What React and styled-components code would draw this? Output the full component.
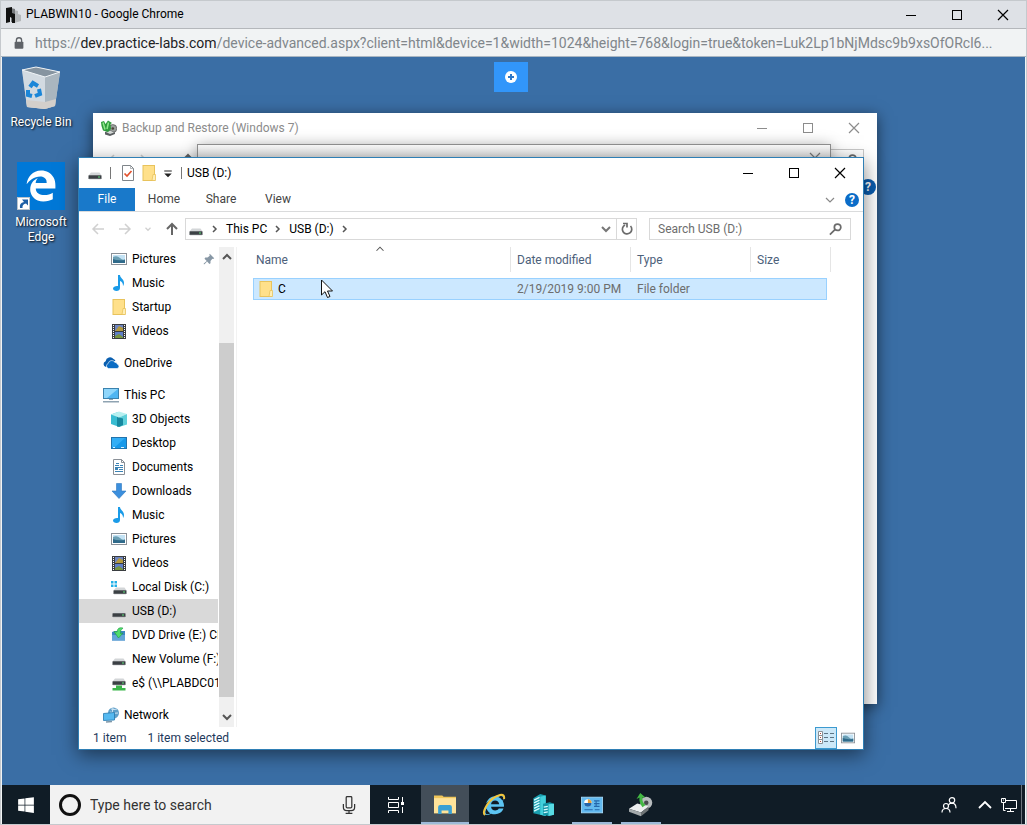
import React from 'react';
import styled, { createGlobalStyle, css } from 'styled-components';
import { FaWindows, FaEdgeLegacy, FaInternetExplorer } from 'react-icons/fa';

const quickAccess = [
    { name: 'Pictures', icon: 'pictures', pinned: true },
    { name: 'Music', icon: 'music' },
    { name: 'Startup', icon: 'folder' },
    { name: 'Videos', icon: 'videos' },
];

const thisPc = [
    { name: '3D Objects', icon: 'objects' },
    { name: 'Desktop', icon: 'desktop' },
    { name: 'Documents', icon: 'documents' },
    { name: 'Downloads', icon: 'downloads' },
    { name: 'Music', icon: 'music' },
    { name: 'Pictures', icon: 'pictures' },
    { name: 'Videos', icon: 'videos' },
    { name: 'Local Disk (C:)', icon: 'systemDrive' },
    { name: 'USB (D:)', icon: 'drive', selected: true },
    { name: 'DVD Drive (E:) CI', icon: 'dvd' },
    { name: 'New Volume (F:)', icon: 'drive' },
    { name: 'e$ (\\\\PLABDC01)', icon: 'netDrive' },
];

const files = [
    { name: 'C', modified: '2/19/2019 9:00 PM', type: 'File folder', size: '' },
];

/* ---------- icons ---------- */

const driveBody = (
    <g>
        <path d="M4 7.500h8.500l2 3h-13z" fill="#d3d6d8" />
        <rect x="1.500" y="10.300" width="13" height="3.700" rx=".5" fill="#3b4044" />
        <path d="M2 13.800h12" stroke="#8b8f92" strokeWidth=".6" />
        <rect x="11" y="11.500" width="2" height="1" fill="#5fe07a" />
    </g>
);

const glyphs = {
    pictures: (
        <g>
            <rect x=".5" y="2.500" width="15" height="11" fill="#fff" stroke="#8a9097" />
            <rect x="2" y="4" width="12" height="8" fill="#c3e2f4" />
            <path d="M2 6q4-2 7 1t5 1v4H2z" fill="#6b9fb4" />
            <path d="M2 8q4 2 12 1v3H2z" fill="#2f6a8a" />
        </g>
    ),
    music: (
        <path d="M7 0h2c0 3 4 4 4 8 0 1-.5 2.500-1 3 .2-3-1.500-4.500-3-5v7c0 2-1.500 3-3.500 3S2 15 2 13.500 4 11 6 11h1z" fill="#1a9be8" />
    ),
    folder: (
        <g>
            <rect x="2" y=".5" width="11.500" height="15" fill="#ffe08a" stroke="#e8c35c" />
            <path d="M12 9.500h2.500v6H11z" fill="#ffeeb5" stroke="#e8c35c" strokeWidth=".8" />
        </g>
    ),
    videos: (
        <g>
            <rect x="1" y="1" width="14" height="15" fill="#3a3d40" />
            <rect x="4" y="2" width="8" height="6" fill="#6f86c2" />
            <rect x="4" y="9" width="8" height="6" fill="#5f7fc8" />
            <path d="M5 7l3-4 4 2v3H4z" fill="#b49a3e" />
            <path d="M4 13l4-2 4 3v1H4z" fill="#78953f" />
            <path d="M2.500 2v14M13.500 2v14" stroke="#fff" strokeWidth="1" strokeDasharray="1 1" />
        </g>
    ),
    cloud: (
        <g fill="#0a6cc4">
            <path d="M3 12a3 3 0 0 1-.4-5.800A4.500 4.500 0 0 1 10.500 4 4 4 0 0 1 12.500 6L8 6.500 5.500 9z" fill="#0a5fb0" />
            <path d="M5.500 13.500a2.600 2.600 0 0 1-.3-5 3.600 3.600 0 0 1 6.600-1.300 3 3 0 0 1 2.600 2A2.200 2.200 0 0 1 14 13.500z" stroke="#fff" strokeWidth=".6" />
        </g>
    ),
    pc: (
        <g>
            <rect x=".5" y="1.500" width="15" height="10" fill="#4fb5f2" stroke="#3b82ae" />
            <path d="M1 2h14L4 11H1z" fill="#8fd6fb" />
            <rect x="6" y="12" width="4" height="1" fill="#8fa3b2" />
            <rect x="0" y="14" width="16" height="1.500" fill="#8fa3b2" />
        </g>
    ),
    objects: (
        <g>
            <path d="M0 3.500L7 1v14.500L0 13z" fill="#38bcd1" />
            <path d="M0 3.500L8 .5l8 2.500-8 3.500z" fill="#b7f0f0" />
            <path d="M8 6.500L16 3v10.500l-8 2.500z" fill="#5fd0da" />
            <path d="M6 6l6 1.500V14l-4 2-2-.5z" fill="#17889f" />
        </g>
    ),
    desktop: (
        <g>
            <rect x=".5" y="2.500" width="15" height="11" fill="#1799ea" stroke="#2273ac" />
            <path d="M1 3h13L4 12H1z" fill="#33aef5" />
            <path d="M2 12.500h12" stroke="#d8f0ff" strokeDasharray="2 6 3 1" />
        </g>
    ),
    documents: (
        <g>
            <path d="M2.500.5h8l3 3v12h-11z" fill="#fff" stroke="#8a9097" />
            <path d="M10.500.5v3h3" fill="none" stroke="#8a9097" />
            <path d="M5 4.500h3M4 6.500h4M9 6.500h3M4 8.500h8M8 10.500h4M4 12.500h8" stroke="#3b83b5" />
            <rect x="4" y="9" width="3" height="2" fill="#3b83b5" />
        </g>
    ),
    downloads: <path d="M5.500.5h5V8h4.500L8 15.500 1 8h4.500z" fill="#3c8fdd" stroke="#2f78c0" strokeWidth=".6" />,
    drive: driveBody,
    systemDrive: (
        <g>
            <g transform="translate(1 1)">{driveBody}</g>
            <path d="M0 2h2.500v2.500H0zM3.500 2H6v2.500H3.500zM0 5.500h2.500V8H0zM3.500 5.500H6V8H3.500z" fill="#22b0e8" />
        </g>
    ),
    dvd: (
        <g>
            <path d="M1 5l3-1h10v9.500H1z" fill="#3d86c4" />
            <path d="M1 8h13v5.500H1z" fill="#62a5d8" />
            <path d="M3 4.500L7.500 11l4.500-5-2.500.5Q9 3 12 1 6.500-.5 6 5z" fill="#4fdc6c" stroke="#1d9a3e" strokeWidth=".6" />
        </g>
    ),
    netDrive: (
        <g>
            <g transform="translate(0 -4)">{driveBody}</g>
            <path d="M5 10.500h6v2.500h3.500v2.500h-13V13H5z" fill="#3bb54a" />
        </g>
    ),
    network: (
        <g>
            <circle cx="10.500" cy="6" r="5.500" fill="#5f9fc8" />
            <path d="M8 2q3 1 6 0M7 5q4 2 8 1M10 1q-2 4 1 9" stroke="#cfe6f5" fill="none" />
            <path d="M.5 6.500l11-1v7.500l-11 .5z" fill="#55b9f0" stroke="#2477ad" strokeWidth=".8" />
            <path d="M3 15l6-.5" stroke="#7f97a8" strokeWidth="1.500" />
        </g>
    ),
    checkDoc: (
        <g>
            <path d="M2.500.5h8l3 3v12h-11z" fill="#fff" stroke="#7f858a" />
            <path d="M10.500.5v3h3" fill="none" stroke="#7f858a" strokeWidth=".6" />
            <path d="M4.500 8.500L7 11l4.500-5" fill="none" stroke="#e2522e" strokeWidth="1.700" />
        </g>
    ),
    backup: (
        <g>
            <circle cx="11.800" cy="8.500" r="4" fill="#9a9f9c" stroke="#444" strokeWidth=".6" />
            <circle cx="11.800" cy="8.500" r="1.300" fill="#4a4438" />
            <path d="M4 12l5-2 5 2.500v1.500l-5 2-5-1.500z" fill="#5a5e60" />
            <path d="M5 12l4-1.500 4 2-4 1.500z" fill="#d4d8d6" />
            <path d="M0 2l3-1 1.500 3L7 .5 11 3 9.500 4l.5 5-3 3-5-1.500L.5 6z" fill="#2f9c3c" />
            <path d="M2 2.500l2 7M7.500 2.500L6 9" stroke="#8fe88a" strokeWidth="1.500" />
        </g>
    ),
    pin: (
        <path d="M9 1l6 6-1.500 1-1-.3-2.500 3 0 3-1.500 1-3-3.500L2 15l-1 0 0-1 4-3.500L2 7.500 3 6h3l3-2.500L8.500 2z" fill="#8797a5" />
    ),
    magnifier: (
        <path d="M1 14.500l5.500-5.500M9.800 2.300a3.700 3.700 0 1 1 0 7.400 3.700 3.700 0 0 1 0-7.400z" fill="none" stroke="#6b6b6b" strokeWidth="2" />
    ),
    refresh: (
        <g fill="none" stroke="#6b6b6b" strokeWidth="1.700">
            <path d="M11.500 5A4.700 4.700 0 1 1 6 4" />
            <path d="M4 2.500h4v4" />
        </g>
    ),
    back: <path d="M14 8H3M8 3L3 8l5 5" fill="none" stroke="currentColor" strokeWidth="1.500" />,
    forward: <path d="M2 8h11M8 3l5 5-5 5" fill="none" stroke="currentColor" strokeWidth="1.500" />,
    up: <path d="M8 14V3M3 8l5-5 5 5" fill="none" stroke="currentColor" strokeWidth="2" />,
    chevronDown: <path d="M4 6l4 4 4-4" fill="none" stroke="currentColor" strokeWidth="2" />,
    chevronUp: <path d="M4 10l4-4 4 4" fill="none" stroke="currentColor" strokeWidth="2" />,
    chevronRight: <path d="M6 5l3 3-3 3" fill="none" stroke="currentColor" strokeWidth="1.500" />,
    thinDown: <path d="M4 6l4 4 4-4" fill="none" stroke="currentColor" strokeWidth="1.200" />,
    thinUp: <path d="M4 10l4-4 4 4" fill="none" stroke="currentColor" strokeWidth="1.200" />,
    customize: <path d="M3 4.500h10v1.500H3zM3 8.500h10l-5 5z" fill="#222" />,
    minimize: <path d="M3 8.500h10" stroke="currentColor" />,
    maximize: <rect x="3.500" y="3.500" width="9" height="9" fill="none" stroke="currentColor" />,
    close: <path d="M3 3l10 10M13 3L3 13" stroke="currentColor" strokeWidth="1.200" />,
    details: (
        <g>
            <path d="M.5 1.500h4v4h-4zM.5 5.500h4v4h-4zM.5 9.500h4v4h-4z" fill="#fff" stroke="#8a8f94" />
            <path d="M2 3.500h1M2 7.500h1M2 11.500h1" stroke="#b04a3a" />
            <path d="M6 3.500h4M12 3.500h4M6 7.500h4M12 7.500h4M6 11.500h4M12 11.500h4" stroke="#5d7585" />
        </g>
    ),
    lock: (
        <g>
            <rect x="3" y="6.500" width="10" height="8" rx="1" fill="#5f6368" />
            <path d="M5 7V5a3 3 0 0 1 6 0v2" fill="none" stroke="#5f6368" strokeWidth="1.500" />
        </g>
    ),
    plab: (
        <g>
            <path d="M9 3l4 1v3l3 1v6l-7 2z" fill="#b4b7ba" />
            <path d="M6 1l4 1v13H6z" fill="#777a7d" />
            <path d="M1 1l6-1v6l3 1v9H7v-5l-2-1v5l-4 1z" fill="#111" />
        </g>
    ),
    plus: (
        <g>
            <circle cx="8" cy="8" r="6" fill="#fff" />
            <path d="M8 5v6M5 8h6" stroke="#2e78c8" strokeWidth="2" />
        </g>
    ),
    taskView: (
        <g fill="none" stroke="#fff">
            <path d="M.5 0v2.500h10V0M.5 16v-2.500h10V16M.5 5.500h10v5H.500zM14.500 0v5M14.500 10v6" />
            <rect x="13" y="5" width="3" height="3" fill="#fff" stroke="none" />
        </g>
    ),
    fileExplorer: (
        <g>
            <path d="M0 1h6l1 1h9v12H0z" fill="#f0c65a" />
            <path d="M0 3h16v11H0z" fill="#ffe39a" />
            <path d="M3 9.500q0-1.500 1.500-1.500h7Q13 8 13 9.500V14.500h-2.500V12h-5v2.500H3z" fill="#3aa0d4" />
        </g>
    ),
    servers: (
        <g>
            <path d="M1 3l5-3 4 1v15l-9-2z" fill="#1a9fb0" />
            <path d="M6 2l4-1v15l-4-1z" fill="#42d0dc" />
            <path d="M1.500 4.500l4-2M1.500 6.500l4-2M1.500 8.500l4-2M1.500 10.500l4-2M1.500 12.500l4-2" stroke="#d6fbff" />
            <path d="M8 7l5-1 3 1v8l-4 1-4-1z" fill="#1496a8" />
            <path d="M12 7.500l4-.5v8l-4 1z" fill="#58dbe4" />
            <path d="M8.500 9.500l3-.5M8.500 11.500l3-.5M8.500 13.500l3-.5" stroke="#d6fbff" />
        </g>
    ),
    controlPanel: (
        <g>
            <rect x=".3" y="2.300" width="15.400" height="11.400" fill="#63baf0" stroke="#a9dcfa" strokeWidth=".6" />
            <circle cx="5" cy="6.500" r="2.700" fill="#fff" />
            <path d="M5 6.500V3.800a2.700 2.700 0 0 1 2.700 2.700z" fill="#e5a03c" />
            <path d="M5 6.500H7.700A2.700 2.700 0 0 1 2.300 6.500z" fill="#2265ac" />
            <path d="M11 4.500v5M9.500 5h4M9.500 7h4M9.500 9h4M2.500 11.500h6M10 11.500h3.500" stroke="#2468ac" strokeWidth=".8" />
        </g>
    ),
    restoreDrive: (
        <g>
            <circle cx="11.500" cy="6.500" r="4" fill="#b8bcbe" />
            <circle cx="11.500" cy="6.500" r="1.500" fill="#474b4d" />
            <path d="M0 10.500l5.500-3.500L13 9l-5 4z" fill="#eceeef" />
            <path d="M0 10.500L8 13v2.500l-8-3z" fill="#a4a9ab" />
            <path d="M8 13l5-4v2.500l-5 4z" fill="#6f7476" />
            <path d="M9 9.500Q6.500 6 7 3L5 4l2.500-4L11 3 9 3q-.5 3 2 5z" fill="#43b843" />
        </g>
    ),
    microphone: (
        <g fill="none" stroke="#333" strokeWidth="1.100">
            <rect x="5.500" y=".5" width="5" height="10" rx="1" />
            <path d="M3 7v3q0 3 3 3h4q3 0 3-3V7M8 13v2.500M5 15.500h6" />
        </g>
    ),
    people: (
        <g fill="none" stroke="#fff" strokeWidth="1.200">
            <circle cx="11" cy="3.300" r="2.700" />
            <path d="M7.500 8q1-1.800 3.500-1.800 4 .3 4 5" />
            <circle cx="5" cy="9" r="2.500" />
            <path d="M1 15.500q0-4 4-4t4 4" />
        </g>
    ),
    ethernet: (
        <g fill="none" stroke="#fff">
            <path d="M5 3.500h10.500v8H4M9.500 11.500v3M6 14.500h7M2.500 6v7.500h2" />
            <path d="M.5 1.500h4v4h-4z" />
            <path d="M2 3h1" />
        </g>
    ),
};

const Icon = ({ name, size = 16 }) => (
    <Svg viewBox="0 0 16 16" $size={size} aria-hidden="true">{glyphs[name]}</Svg>
);

const RecycleBin = () => (
    <svg width="40" height="44" viewBox="0 0 40 44" aria-hidden="true">
        <path d="M1 4l14-3 24 5-5 34-10 3-18-2z" fill="#cbd3d9" fillOpacity=".85" />
        <path d="M1 4l14-3 24 5-15 5z" fill="#8694a0" />
        <path d="M1 4l23 7v32L6 41z" fill="#dce2e6" fillOpacity=".75" />
        <path d="M24 11l15-5-5 34-10 3z" fill="#aab6bf" />
        <path d="M5 34l19 2 11-3-1 7-10 3-18-2z" fill="#d3cfcb" />
        <path d="M1 4l14-3 24 5-15 5z" fill="none" stroke="#eef2f5" />
        <g fill="none" stroke="#1b86d8" strokeWidth="4">
            <path d="M9 21l3-4 5 3" />
            <path d="M18 23l1 5-5 2" />
            <path d="M11 30l-4-1 0-5" />
        </g>
    </svg>
);

const ShortcutArrow = () => (
    <ShortcutSvg viewBox="0 0 13 13" aria-hidden="true">
        <rect x=".5" y=".5" width="12" height="12" fill="#fff" stroke="#b9c4cc" />
        <path d="M3 11Q2 6 7 5L5 2.500h6V8.500L9 6.500Q5 7 5.500 11z" fill="#1d5fa5" />
    </ShortcutSvg>
);

const BrowserTaskIcon = () => (
    <BrowserMark>
        <FaInternetExplorer />
        <svg viewBox="0 0 24 24" aria-hidden="true">
            <path d="M3 22Q0 20 5 12T18 2q5-1 4 4" fill="none" stroke="#f3c53c" strokeWidth="2" />
        </svg>
    </BrowserMark>
);

const Cursor = () => (
    <CursorSvg viewBox="0 0 12 20" aria-hidden="true">
        <path d="M.5 1v15l3.500-3.300L6.500 18.500l2.500-1-2.500-5.500h5z" fill="#fff" stroke="#111" />
    </CursorSvg>
);

/* ---------- parts ---------- */

const WindowControls = ({ color }) => (
    <Controls $color={color}>
        <ControlButton type="button" aria-label="Minimize"><Icon name="minimize" /></ControlButton>
        <ControlButton type="button" aria-label="Maximize"><Icon name="maximize" /></ControlButton>
        <ControlButton type="button" aria-label="Close"><Icon name="close" /></ControlButton>
    </Controls>
);

const TreeItem = ({ name, icon, nested, pinned, selected }) => (
    <TreeLink href="#" $nested={nested} $selected={selected}>
        <Icon name={icon} />
        <span>{name}</span>
        {pinned && <Pin><Icon name="pin" size={12} /></Pin>}
    </TreeLink>
);

const HistoryButtons = () => (
    <History>
        <ArrowButton type="button" aria-label="Back" $faded><Icon name="back" /></ArrowButton>
        <ArrowButton type="button" aria-label="Forward" $faded><Icon name="forward" /></ArrowButton>
        <ArrowButton type="button" aria-label="Recent locations" $faded><Icon name="chevronDown" size={10} /></ArrowButton>
        <ArrowButton type="button" aria-label="Up"><Icon name="up" /></ArrowButton>
    </History>
);

const BackupWindow = () => (
    <BackWindow>
        <TitleBar $muted>
            <Icon name="backup" />
            <WindowTitle>Backup and Restore (Windows 7)</WindowTitle>
            <WindowControls color="#8c8c8c" />
        </TitleBar>
        <BackToolbar>
            <HistoryButtons />
            <BackSearch><Icon name="magnifier" size={14} /></BackSearch>
        </BackToolbar>
        <DialogEdge>
            <Icon name="close" />
        </DialogEdge>
        <BackHelp type="button" aria-label="Help">?</BackHelp>
    </BackWindow>
);

const Explorer = () => (
    <ExplorerWindow>
        <TitleBar>
            <QuickTools>
                <Icon name="drive" />
                <Divider />
                <ToolGroup>
                    <ToolButton type="button" aria-label="Properties"><Icon name="checkDoc" /></ToolButton>
                    <ToolButton type="button" aria-label="New folder"><Icon name="folder" /></ToolButton>
                    <ToolButton type="button" aria-label="Customize toolbar"><Icon name="customize" size={12} /></ToolButton>
                </ToolGroup>
                <Divider />
            </QuickTools>
            <WindowTitle>USB (D:)</WindowTitle>
            <WindowControls color="#000" />
        </TitleBar>

        <Ribbon>
            <RibbonTab type="button" $active>File</RibbonTab>
            <RibbonTab type="button">Home</RibbonTab>
            <RibbonTab type="button">Share</RibbonTab>
            <RibbonTab type="button">View</RibbonTab>
            <RibbonEnd>
                <Icon name="thinDown" />
                <HelpButton type="button" aria-label="Help">?</HelpButton>
            </RibbonEnd>
        </Ribbon>

        <AddressRow>
            <HistoryButtons />
            <AddressBox>
                <Crumbs>
                    <Icon name="drive" />
                    <Icon name="chevronRight" />
                    <a href="#">This PC</a>
                    <Icon name="chevronRight" />
                    <a href="#">USB (D:)</a>
                    <Icon name="chevronRight" />
                </Crumbs>
                <AddressButton type="button" aria-label="Previous locations"><Icon name="chevronDown" /></AddressButton>
                <AddressButton type="button" aria-label="Refresh" $bordered><Icon name="refresh" /></AddressButton>
            </AddressBox>
            <SearchBox>
                <input type="search" aria-label="Search USB (D:)" placeholder="Search USB (D:)" />
                <Icon name="magnifier" size={14} />
            </SearchBox>
        </AddressRow>

        <ExplorerBody>
            <NavPane>
                <Tree>
                    <TreeGroup>
                        {quickAccess.map(item => <TreeItem key={item.name} nested {...item} />)}
                    </TreeGroup>
                    <TreeGroup>
                        <TreeItem name="OneDrive" icon="cloud" />
                    </TreeGroup>
                    <TreeGroup>
                        <TreeItem name="This PC" icon="pc" />
                        {thisPc.map(item => <TreeItem key={item.name} nested {...item} />)}
                    </TreeGroup>
                    <TreeGroup>
                        <TreeItem name="Network" icon="network" />
                    </TreeGroup>
                </Tree>
                <ScrollBar>
                    <Icon name="chevronUp" />
                    <ScrollThumb />
                    <Icon name="chevronDown" />
                </ScrollBar>
            </NavPane>
            <FilePane>
                <SortMark><Icon name="thinUp" size={14} /></SortMark>
                <FileTable>
                    <colgroup>
                        <col />
                        <col width="120" />
                        <col width="120" />
                        <col width="76" />
                    </colgroup>
                    <thead>
                        <tr>
                            <th>Name</th>
                            <th>Date modified</th>
                            <th>Type</th>
                            <th>Size</th>
                        </tr>
                    </thead>
                    <tbody>
                        {files.map(file => (
                            <tr key={file.name}>
                                <td>
                                    <FileName>
                                        <Icon name="folder" />
                                        {file.name}
                                    </FileName>
                                </td>
                                <td>{file.modified}</td>
                                <td>{file.type}</td>
                                <td>{file.size}</td>
                            </tr>
                        ))}
                    </tbody>
                </FileTable>
                <Cursor />
            </FilePane>
        </ExplorerBody>

        <StatusBar>
            <span>1 item</span>
            <span>1 item selected</span>
            <ViewButtons>
                <ViewButton type="button" aria-label="Details view" $active><Icon name="details" /></ViewButton>
                <ViewButton type="button" aria-label="Large thumbnails"><Icon name="pictures" size={14} /></ViewButton>
            </ViewButtons>
        </StatusBar>
    </ExplorerWindow>
);

const App = () => (
    <Page>
        <GlobalStyle />
        <ChromeTitle>
            <Icon name="plab" />
            <WindowTitle>PLABWIN10 - Google Chrome</WindowTitle>
            <WindowControls color="#000" />
        </ChromeTitle>
        <UrlBar>
            <Icon name="lock" size={14} />
            <Url>
                https://<b>dev.practice-labs.com</b>/device-advanced.aspx?client=html&amp;device=1&amp;width=1024&amp;height=768&amp;login=true&amp;token=Luk2Lp1bNjMdsc9b9xsOfORcl6...
            </Url>
        </UrlBar>
        <Desktop>
            <Shortcuts>
                <Shortcut href="#">
                    <RecycleBin />
                    Recycle Bin
                </Shortcut>
                <Shortcut href="#">
                    <EdgeTile>
                        <FaEdgeLegacy />
                        <ShortcutArrow />
                    </EdgeTile>
                    Microsoft Edge
                </Shortcut>
            </Shortcuts>
            <PanelToggle type="button" aria-label="Open panel"><Icon name="plus" /></PanelToggle>
            <BackupWindow />
            <Explorer />
        </Desktop>
        <Taskbar>
            <TaskButton type="button" aria-label="Start"><FaWindows size={18} /></TaskButton>
            <TaskSearch>
                <Ring />
                <input type="text" aria-label="Type here to search" placeholder="Type here to search" />
                <Icon name="microphone" size={18} />
            </TaskSearch>
            <TaskList>
                <TaskButton type="button" aria-label="Task View"><Icon name="taskView" /></TaskButton>
                <TaskButton type="button" aria-label="File Explorer" $active><Icon name="fileExplorer" size={22} /></TaskButton>
                <TaskButton type="button" aria-label="Internet Explorer"><BrowserTaskIcon /></TaskButton>
                <TaskButton type="button" aria-label="Server Manager"><Icon name="servers" size={22} /></TaskButton>
                <TaskButton type="button" aria-label="Control Panel" $running><Icon name="controlPanel" size={22} /></TaskButton>
                <TaskButton type="button" aria-label="Backup and Restore" $running><Icon name="restoreDrive" size={24} /></TaskButton>
            </TaskList>
            <Tray>
                <TrayButton type="button" aria-label="People"><Icon name="people" /></TrayButton>
                <TrayButton type="button" aria-label="Show hidden icons"><Icon name="thinUp" size={24} /></TrayButton>
                <TrayButton type="button" aria-label="Network"><Icon name="ethernet" /></TrayButton>
            </Tray>
        </Taskbar>
    </Page>
);

/* ---------- styles ---------- */

const GlobalStyle = createGlobalStyle`
    *, *:before, *:after{
        box-sizing:border-box;
    }
    body{
        margin:0;
        font-family:Roboto, "Open Sans", sans-serif;
        font-size:12px;
        line-height:15px;
        color:#000;
    }
    button, input{
        font:inherit;
        color:inherit;
        background:none;
        border:0;
        padding:0;
        margin:0;
        outline:0;
    }
    a{
        color:inherit;
        text-decoration:none;
    }
`;

const Svg = styled.svg`
    display:block;
    flex:none;
    width:${p => p.$size}px;
    height:${p => p.$size}px;
`;

const Page = styled.div`
    min-height:100vh;
    display:flex;
    flex-direction:column;
    border:1px solid #c5c9cd;
    background:#f1f3f4;
`;

const TitleBar = styled.header`
    height:30px;
    display:flex;
    align-items:center;
    padding-left:8px;
    color:${p => p.$muted ? '#8c8c8c' : '#000'};
`;

const ChromeTitle = styled(TitleBar)`
    height:28px;
    padding-left:4px;
    background:#dee1e6;
    border-bottom:1px solid #b4b7bb;
`;

const WindowTitle = styled.span`
    flex:1;
    padding-left:5px;
`;

const Controls = styled.div`
    display:flex;
    align-self:stretch;
    color:${p => p.$color};
`;

const ControlButton = styled.button`
    width:46px;
    display:flex;
    align-items:center;
    justify-content:center;
`;

const UrlBar = styled.div`
    height:28px;
    display:flex;
    align-items:center;
    gap:9px;
    padding:0 10px 0 11px;
    border-bottom:1px solid #a9b6c2;
`;

const Url = styled.span`
    flex:1;
    min-width:0;
    font-size:14px;
    line-height:20px;
    color:#80868b;
    white-space:nowrap;
    b{
        font-weight:400;
        color:#202124;
    }
`;

const Desktop = styled.main`
    position:relative;
    flex:1;
    min-height:727px;
    margin:0 1px;
    background:#3a6ea5;
`;

const Shortcuts = styled.nav`
    width:78px;
    padding-top:9px;
    display:flex;
    flex-direction:column;
    gap:32px;
`;

const Shortcut = styled.a`
    display:flex;
    flex-direction:column;
    align-items:center;
    gap:5px;
    padding:0 8px;
    color:#fff;
    text-align:center;
    text-shadow:1px 1px 2px #000;
    white-space:nowrap;
    &:last-child{
        white-space:normal;
    }
`;

const EdgeTile = styled.span`
    position:relative;
    width:48px;
    height:48px;
    display:flex;
    align-items:center;
    justify-content:center;
    background:#0078d7;
    > svg:first-child{
        width:32px;
        height:32px;
    }
`;

const ShortcutSvg = styled.svg`
    position:absolute;
    left:0;
    bottom:0;
    width:13px;
    height:13px;
`;

const PanelToggle = styled.button`
    position:absolute;
    top:5px;
    left:50%;
    margin-left:-20px;
    width:34px;
    height:30px;
    display:flex;
    align-items:center;
    justify-content:center;
    background:#3296fa;
`;

const BackWindow = styled.section`
    position:absolute;
    left:91px;
    right:148px;
    top:56px;
    height:591px;
    background:#fff;
    box-shadow:0 3px 14px rgba(0,0,0,.55);
`;

const BackToolbar = styled.div`
    display:flex;
    justify-content:space-between;
    padding:6px 13px;
`;

const BackSearch = styled.div`
    width:60px;
    height:22px;
    display:flex;
    align-items:center;
    justify-content:flex-end;
    padding-right:5px;
    border:1px solid #c9c9c9;
`;

const DialogEdge = styled.div`
    position:absolute;
    left:104px;
    right:46px;
    top:31px;
    height:60px;
    display:flex;
    justify-content:flex-end;
    padding:5px 7px;
    color:#777;
    background:linear-gradient(#fafafa, #dcdcdc 14px);
    border:1px solid #8f8f8f;
    box-shadow:0 2px 14px rgba(0,0,0,.35);
`;

const HelpButton = styled.button`
    width:14px;
    height:14px;
    border-radius:50%;
    background:#0a6cc8;
    color:#fff;
    font-size:12px;
    font-weight:700;
    line-height:14px;
`;

const BackHelp = styled(HelpButton)`
    position:absolute;
    right:1px;
    top:66px;
    width:16px;
    height:16px;
    background:#0a5cae;
`;

const ExplorerWindow = styled.section`
    position:absolute;
    left:76px;
    right:161px;
    top:100px;
    background:#fff;
    border:1px solid #2f7fb5;
    box-shadow:0 5px 18px rgba(0,0,0,.5);
`;

const QuickTools = styled.div`
    display:flex;
    align-items:center;
    gap:7px;
`;

const ToolGroup = styled.div`
    display:flex;
    align-items:center;
    gap:5px;
    padding-left:2px;
`;

const Divider = styled.span`
    width:1px;
    height:12px;
    background:#777;
`;

const ToolButton = styled.button`
    display:flex;
`;

const Ribbon = styled.div`
    display:flex;
    gap:1px;
    height:24px;
    border-bottom:1px solid #dadbdc;
`;

const RibbonTab = styled.button`
    min-width:56px;
    color:#444;
    ${p => p.$active && css`
        background:#1979ca;
        color:#fff;
    `}
`;

const RibbonEnd = styled.div`
    display:flex;
    align-items:center;
    gap:7px;
    margin-left:auto;
    padding-right:4px;
    color:#888;
`;

const AddressRow = styled.div`
    display:flex;
    padding:6px 12px 7px 11px;
`;

const History = styled.div`
    width:95px;
    display:flex;
    align-items:center;
    justify-content:space-between;
    padding-right:5px;
`;

const ArrowButton = styled.button`
    display:flex;
    color:${p => p.$faded ? '#d0d0d0' : '#666'};
`;

const AddressBox = styled.div`
    flex:1;
    display:flex;
    height:22px;
    border:1px solid #d9d9d9;
`;

const Crumbs = styled.div`
    flex:1;
    display:flex;
    align-items:center;
    gap:3px;
    padding-left:2px;
    svg + svg, a + svg{
        color:#555;
    }
`;

const AddressButton = styled.button`
    width:20px;
    display:flex;
    align-items:center;
    justify-content:center;
    color:#777;
    ${p => p.$bordered && css`
        border-left:1px solid #d9d9d9;
    `}
`;

const SearchBox = styled.div`
    width:202px;
    height:22px;
    display:flex;
    align-items:center;
    margin-left:12px;
    padding:0 7px 0 8px;
    border:1px solid #d9d9d9;
    input{
        flex:1;
        min-width:0;
    }
    input::placeholder{
        color:#6d6d6d;
        opacity:1;
    }
`;

const ExplorerBody = styled.div`
    display:flex;
`;

const NavPane = styled.aside`
    width:158px;
    display:flex;
    padding-right:2px;
    border-right:1px solid #f2f2f2;
`;

const Tree = styled.nav`
    flex:1;
    min-width:0;
    display:flex;
    flex-direction:column;
    gap:8px;
`;

const TreeGroup = styled.div``;

const TreeLink = styled.a`
    height:24px;
    display:flex;
    align-items:center;
    gap:5px;
    margin-right:1px;
    padding-left:${p => p.$nested ? '32px' : '24px'};
    overflow:hidden;
    white-space:nowrap;
    background:${p => p.$selected ? '#d9d9d9' : 'transparent'};
`;

const Pin = styled.span`
    margin-left:auto;
    padding-right:3px;
`;

const ScrollBar = styled.div`
    width:15px;
    display:flex;
    flex-direction:column;
    align-items:center;
    padding:2px 0;
    color:#555;
    background:#f0f0f0;
`;

const ScrollThumb = styled.div`
    width:100%;
    flex:1;
    margin:78px 0 12px;
    background:#cdcdcd;
`;

const FilePane = styled.section`
    position:relative;
    flex:1;
    padding-left:16px;
    padding-right:36px;
`;

const SortMark = styled.span`
    position:absolute;
    left:136px;
    top:-5px;
    color:#555;
`;

const FileTable = styled.table`
    width:100%;
    table-layout:fixed;
    border-collapse:separate;
    border-spacing:0;
    th{
        position:relative;
        height:26px;
        padding:0 0 0 6px;
        text-align:left;
        font-weight:400;
        color:#4c607a;
        &:after{
            content:'';
            position:absolute;
            right:0;
            top:0;
            width:1px;
            height:25px;
            background:#e5e5e5;
        }
        &:first-child{
            padding-left:3px;
        }
        &:last-child:after{
            right:-4px;
        }
    }
    thead:after{
        content:'';
        display:block;
        height:5px;
    }
    td{
        height:22px;
        padding:0 0 0 6px;
        color:#6d6d6d;
        background:#cce8ff;
        border:solid #99d1ff;
        border-width:1px 0;
        &:first-child{
            padding-left:4px;
            border-left-width:1px;
            color:#000;
        }
        &:last-child{
            border-right-width:1px;
        }
    }
`;

const FileName = styled.span`
    display:flex;
    align-items:center;
    gap:4px;
`;

const CursorSvg = styled.svg`
    position:absolute;
    left:84px;
    top:32px;
    width:12px;
    height:20px;
`;

const StatusBar = styled.footer`
    height:22px;
    display:flex;
    align-items:center;
    gap:21px;
    padding:0 4px 0 14px;
    color:#1e395b;
`;

const ViewButtons = styled.div`
    display:flex;
    align-self:stretch;
    margin-left:auto;
`;

const ViewButton = styled.button`
    width:22px;
    display:flex;
    align-items:center;
    justify-content:center;
    ${p => p.$active && css`
        background:#cce8f8;
        border:1px solid #3c9ad0;
    `}
`;

const Taskbar = styled.footer`
    height:39px;
    display:flex;
    margin:0 1px;
    background:#101c26;
    color:#fff;
`;

const TaskSearch = styled.div`
    width:320px;
    display:flex;
    align-items:center;
    padding:0 12px 0 9px;
    gap:9px;
    background:#f2f2f2;
    input{
        flex:1;
        min-width:0;
        font-size:14px;
        line-height:20px;
        color:#333;
    }
    input::placeholder{
        color:#333;
        opacity:1;
    }
`;

const Ring = styled.span`
    width:22px;
    height:22px;
    border:3px solid #111;
    border-radius:50%;
`;

const TaskList = styled.div`
    display:flex;
    gap:1px;
    padding-left:2px;
    flex:1;
`;

const TaskButton = styled.button`
    position:relative;
    width:48px;
    display:flex;
    align-items:center;
    justify-content:center;
    ${p => p.$active && css`
        background:#434e59;
    `}
    ${p => (p.$active || p.$running) && css`
        &:after{
            content:'';
            position:absolute;
            bottom:0;
            left:${p.$active ? '0' : '4px'};
            right:${p.$active ? '0' : '4px'};
            height:2px;
            background:#9db9d8;
        }
    `}
`;

const BrowserMark = styled.span`
    position:relative;
    display:flex;
    color:#5cc4f2;
    > svg:first-child{
        width:20px;
        height:20px;
    }
    > svg:last-child{
        position:absolute;
        left:-2px;
        top:-2px;
        width:24px;
        height:24px;
    }
`;

const Tray = styled.div`
    display:flex;
    align-items:center;
    gap:4px;
    margin-right:3px;
    padding-right:4px;
    border-right:1px solid #6b747c;
`;

const TrayButton = styled.button`
    display:flex;
    &:first-child{
        margin-right:12px;
    }
`;

export default App;
